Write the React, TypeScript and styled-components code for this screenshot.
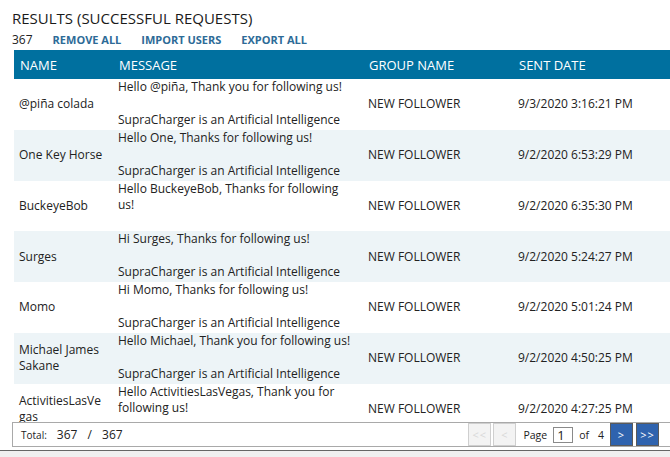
import React from "react";
import styled, { createGlobalStyle } from "styled-components";

const Global = createGlobalStyle`
  html, body { margin: 0; padding: 0; background: #fff; overflow: hidden; }
  body { font-family: "Open Sans", "Noto Sans", sans-serif; color: #222; }
  * { box-sizing: border-box; }
`;

const Page = styled.div`
  width: 670px;
  height: 457px;
  overflow: hidden;
  display: flex;
  flex-direction: column;
  padding-top: 8px;
`;

const Title = styled.h1`
  margin: 0 0 0 12px;
  font-size: 15px;
  font-weight: 400;
  line-height: 20px;
  color: #1a1a1a;
  white-space: nowrap;
`;

const Toolbar = styled.div`
  display: flex;
  align-items: center;
  gap: 20px;
  margin: 3px 0 0 12px;
  height: 18px;
  white-space: nowrap;
`;

const Count = styled.span`
  font-size: 12px;
  color: #222;
`;

const ActionLink = styled.a`
  font-size: 11px;
  font-weight: 700;
  color: #2d6b97;
  text-decoration: none;
  cursor: pointer;
`;

const Grid = styled.div`
  margin: 2px 0 0 14px;
  width: 660px;
  flex: 0 0 auto;
`;

const cols = "99px 250px 150px 1fr";

const HeaderRow = styled.div`
  display: grid;
  grid-template-columns: ${cols};
  height: 29px;
  align-items: center;
  background: #00709f;
`;

const HeadCell = styled.div`
  color: #fff;
  font-size: 13px;
  padding-left: 6px;
  white-space: nowrap;
`;

const Body = styled.div`
  height: 343px;
  overflow: hidden;
`;

const Row = styled.div<{ $alt: boolean }>`
  display: grid;
  grid-template-columns: ${cols};
  height: 50.8px;
  align-items: center;
  background: ${(p) => (p.$alt ? "#edf4f7" : "#fff")};
  font-size: 12px;
  color: #222;
`;

const Cell = styled.div`
  padding: 0 6px 0 5px;
  line-height: 16.5px;
  overflow-wrap: anywhere;
`;

const MessageCell = styled.div`
  align-self: start;
  padding: 0 6px 0 5px;
  line-height: 16.5px;
  height: 50px;
  overflow: hidden;
  white-space: pre-line;
`;

const Footer = styled.div`
  margin-left: 12px;
  width: 662px;
  height: 27px;
  border: 1px solid #a9a9a9;
  display: flex;
  align-items: center;
  padding: 0 0 0 8px;
  background: #fff;
`;

const TotalLabel = styled.span`
  font-size: 10px;
  color: #222;
  margin-right: 10px;
`;

const TotalValue = styled.span`
  font-size: 12px;
  color: #222;
  word-spacing: 7px;
`;

const Pager = styled.div`
  margin-left: auto;
  display: flex;
  align-items: center;
  margin-right: 14px;
  font-size: 10.5px;
  color: #222;
`;

const PageBtn = styled.button<{ $active: boolean }>`
  width: 23px;
  height: 23px;
  padding: 0;
  font-family: inherit;
  font-size: 11px;
  border: 1px solid ${(p) => (p.$active ? "#5a5a5a" : "#cfcfcf")};
  background: ${(p) => (p.$active ? "#2f63ae" : "#f3f3f3")};
  color: ${(p) => (p.$active ? "#fff" : "#d8d8d8")};
  margin-left: ${(p) => (p.$active ? "3px" : "2px")};
  letter-spacing: 1px;
`;

const PageLabel = styled.span`
  margin: 0 6px 0 7px;
`;

const PageInput = styled.input`
  width: 20px;
  height: 16px;
  border: 1px solid #8a8a8a;
  font-family: inherit;
  font-size: 13px;
  padding: 0 0 0 3px;
  color: #222;
`;

const OfLabel = styled.span`
  margin: 0 9px 0 6px;
`;

const LastLabel = styled.span`
  margin-right: 3px;
`;

const Scrollbar = styled.div`
  margin-top: 3px;
  height: 10px;
  border-top: 1px solid #666;
  background: #f0f0f0;
`;

const rows = [
  { name: "@piña colada", msg: "Hello @piña, Thank you for following us!\n\nSupraCharger is an Artificial Intelligence", date: "9/3/2020 3:16:21 PM" },
  { name: "One Key Horse", msg: "Hello One, Thanks for following us!\n\nSupraCharger is an Artificial Intelligence", date: "9/2/2020 6:53:29 PM" },
  { name: "BuckeyeBob", msg: "Hello BuckeyeBob, Thanks for following us!\n\nSupraCharger is an Artificial Intelligence", date: "9/2/2020 6:35:30 PM" },
  { name: "Surges", msg: "Hi Surges, Thanks for following us!\n\nSupraCharger is an Artificial Intelligence", date: "9/2/2020 5:24:27 PM" },
  { name: "Momo", msg: "Hi Momo, Thanks for following us!\n\nSupraCharger is an Artificial Intelligence", date: "9/2/2020 5:01:24 PM" },
  { name: "Michael James Sakane", msg: "Hello Michael, Thank you for following us!\n\nSupraCharger is an Artificial Intelligence", date: "9/2/2020 4:50:25 PM" },
  { name: "ActivitiesLasVegas", msg: "Hello ActivitiesLasVegas, Thank you for following us!\n\nSupraCharger is an Artificial Intelligence", date: "9/2/2020 4:27:25 PM" },
];

export default function App() {
  return (
    <>
      <Global />
      <Page>
        <Title>RESULTS (SUCCESSFUL REQUESTS)</Title>
        <Toolbar>
          <Count>367</Count>
          <ActionLink>REMOVE ALL</ActionLink>
          <ActionLink>IMPORT USERS</ActionLink>
          <ActionLink>EXPORT ALL</ActionLink>
        </Toolbar>
        <Grid>
          <HeaderRow>
            <HeadCell>NAME</HeadCell>
            <HeadCell>MESSAGE</HeadCell>
            <HeadCell>GROUP NAME</HeadCell>
            <HeadCell>SENT DATE</HeadCell>
          </HeaderRow>
          <Body>
            {rows.map((r, i) => (
              <Row key={i} $alt={i % 2 === 1}>
                <Cell>{r.name}</Cell>
                <MessageCell>{r.msg}</MessageCell>
                <Cell>NEW FOLLOWER</Cell>
                <Cell>{r.date}</Cell>
              </Row>
            ))}
          </Body>
        </Grid>
        <Footer>
          <TotalLabel>Total:</TotalLabel>
          <TotalValue>367 / 367</TotalValue>
          <Pager>
            <PageBtn $active={false}>&lt;&lt;</PageBtn>
            <PageBtn $active={false}>&lt;</PageBtn>
            <PageLabel>Page</PageLabel>
            <PageInput defaultValue="1" />
            <OfLabel>of</OfLabel>
            <LastLabel>4</LastLabel>
            <PageBtn $active={true}>&gt;</PageBtn>
            <PageBtn $active={true}>&gt;&gt;</PageBtn>
          </Pager>
        </Footer>
        <Scrollbar />
      </Page>
    </>
  );
}
